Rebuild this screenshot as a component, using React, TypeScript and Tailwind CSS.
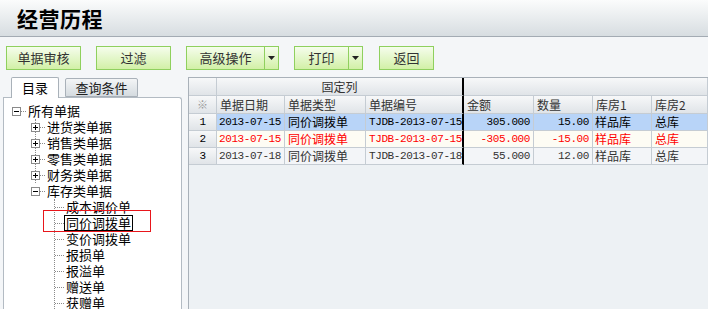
import React from "react";

const cjk = "font-['Noto_Sans_CJK_SC','Noto_Sans',sans-serif]";
const mono = "font-['Liberation_Mono','Noto_Sans_CJK_SC',monospace] text-[11px] tracking-[-0.4px]";

function Btn({ label, w, split }: { label: string; w: number; split?: boolean }) {
  return (
    <div
      className="flex h-[24px] border border-[#8fd05e] bg-gradient-to-b from-[#f5fdec] to-[#d2f0a6] text-[13px] text-[#333]"
      style={{ width: w }}
    >
      <div className="flex flex-1 items-center justify-center">{label}</div>
      {split && (
        <div className="flex w-[14px] items-center justify-center border-l border-[#8fd05e]">
          <svg width="7" height="4" viewBox="0 0 7 4">
            <path d="M0 0h7L3.5 4z" fill="#222" />
          </svg>
        </div>
      )}
    </div>
  );
}

function Exp({ plus }: { plus?: boolean }) {
  return (
    <svg width="9" height="9" viewBox="0 0 9 9" className="shrink-0">
      <rect x="0.5" y="0.5" width="8" height="8" fill="white" stroke="#8a8a8a" />
      <path d="M2 4.5h5" stroke="#000" />
      {plus && <path d="M4.5 2v5" stroke="#000" />}
    </svg>
  );
}

const hdot = "border-t border-dotted border-[#8a8a8a]";

function L1({ label, plus = true }: { label: string; plus?: boolean }) {
  return (
    <div className="flex h-[16px] items-center">
      <div className="ml-[-5px] flex items-center">
        <Exp plus={plus} />
      </div>
      <span className={`w-[5px] ${hdot}`} />
      <span className="ml-[2px] leading-[16px]">{label}</span>
    </div>
  );
}

function L2({ label, focus }: { label: string; focus?: boolean }) {
  return (
    <div className="flex h-[16px] items-center">
      <span className={`w-[9px] ${hdot}`} />
      <span
        className={`h-[16px] border px-[1px] leading-[14px] ${focus ? "border-black" : "border-transparent"}`}
      >
        {label}
      </span>
    </div>
  );
}

const cellB = "border-r border-b border-[#c5ccd3]";
const hdrBg = "bg-gradient-to-b from-[#f7f8f9] to-[#e0e4e8]";

type Row = { n: string; date: string; type: string; code: string; amt: string; qty: string; w1: string; w2: string; bg: string; color: string };

const rows: Row[] = [
  { n: "1", date: "2013-07-15", type: "同价调拨单", code: "TJDB-2013-07-15-001", amt: "305.000", qty: "15.00", w1: "样品库", w2: "总库", bg: "bg-[#b8d4f8]", color: "text-[#000]" },
  { n: "2", date: "2013-07-15", type: "同价调拨单", code: "TJDB-2013-07-15-002", amt: "-305.000", qty: "-15.00", w1: "样品库", w2: "总库", bg: "bg-[#fdfcf4]", color: "text-[#ff0000]" },
  { n: "3", date: "2013-07-18", type: "同价调拨单", code: "TJDB-2013-07-18-001", amt: "55.000", qty: "12.00", w1: "样品库", w2: "总库", bg: "bg-[#f3f5f8]", color: "text-[#333]" },
];

export default function App() {
  return (
    <div className={`flex h-[309px] w-[708px] flex-col overflow-hidden bg-[#f4f6f8] ${cjk}`}>
      {/* header */}
      <div className="h-[37px] shrink-0 border-b border-[#a3abb3] bg-gradient-to-b from-[#fbfcfc] to-[#d7dde1] pl-[17px]">
        <div className="text-[21px] font-bold leading-[36px] tracking-[0.5px] text-black">经营历程</div>
      </div>

      {/* toolbar */}
      <div className="mt-[9px] flex shrink-0 items-start pl-[6px]">
        <Btn label="单据审核" w={75} />
        <div className="ml-[15px]">
          <Btn label="过滤" w={75} />
        </div>
        <div className="ml-[15px]">
          <Btn label="高级操作" w={93} split />
        </div>
        <div className="ml-[15px]">
          <Btn label="打印" w={69} split />
        </div>
        <div className="ml-[16px]">
          <Btn label="返回" w={55} />
        </div>
      </div>

      {/* content */}
      <div className="mt-[7px] flex min-h-0 flex-1 pl-[3px]">
        {/* left panel */}
        <div className="flex w-[179px] shrink-0 flex-col">
          <div className="relative z-10 -mb-px flex h-[21px] items-start pl-[8px] text-[13px]">
            <div className="flex h-[21px] w-[48px] items-center justify-center rounded-t-[2px] border border-b-0 border-[#a9b1b9] bg-white text-black">
              目录
            </div>
            <div className="ml-[6px] mt-[1px] flex h-[19px] w-[73px] items-center justify-center rounded-t-[2px] border border-[#a9b1b9] bg-gradient-to-b from-[#f3f5f6] to-[#d5dbe0] text-[#222]">
              查询条件
            </div>
          </div>
          <div className="relative flex-1 rounded-tr-[3px] border border-b-0 border-[#b3bbc3] bg-white pt-[5px] text-[13px] text-black">
            <div className="flex h-[16px] items-center pl-[8px]">
              <Exp />
              <span className={`w-[5px] ${hdot}`} />
              <span className="ml-[2px] leading-[16px]">所有单据</span>
            </div>
            <div className="ml-[31px] border-l border-dotted border-[#8a8a8a]">
              <L1 label="进货类单据" />
              <L1 label="销售类单据" />
              <L1 label="零售类单据" />
              <L1 label="财务类单据" />
            </div>
            <div className="ml-[32px]">
              <L1 label="库存类单据" plus={false} />
            </div>
            <div className="ml-[50px] border-l border-dotted border-[#8a8a8a]">
              <L2 label="成本调价单" />
              <L2 label="同价调拨单" focus />
              <L2 label="变价调拨单" />
              <L2 label="报损单" />
              <L2 label="报溢单" />
              <L2 label="赠送单" />
              <L2 label="获赠单" />
            </div>
            <div className="absolute left-[39px] top-[112px] h-[22px] w-[108px] border border-[#e8161b]" />
          </div>
        </div>

        {/* grid */}
        <div className="ml-[6px] flex min-w-0 flex-1 flex-col border-l border-t border-[#a9b1b9] text-[12px]">
          {/* header row 1 */}
          <div className="flex h-[18px] shrink-0">
            <div className={`w-[28px] ${cellB} ${hdrBg}`} />
            <div className={`flex w-[247px] items-center justify-center border-b border-r-2 border-[#c5ccd3] border-r-black ${hdrBg} text-[#333]`}>
              固定列
            </div>
            <div className={`flex-1 ${cellB} ${hdrBg}`} />
          </div>
          {/* header row 2 */}
          <div className="flex h-[18px] shrink-0 text-[#333]">
            <div className={`flex w-[28px] items-center justify-center text-[11px] text-[#999] ${cellB} ${hdrBg}`}>※</div>
            <div className={`flex w-[68px] items-center pl-[3px] ${cellB} ${hdrBg}`}>单据日期</div>
            <div className={`flex w-[81px] items-center pl-[3px] ${cellB} ${hdrBg}`}>单据类型</div>
            <div className={`flex w-[98px] items-center pl-[3px] border-b border-r-2 border-[#c5ccd3] border-r-black ${hdrBg}`}>单据编号</div>
            <div className={`flex w-[70px] items-center pl-[3px] ${cellB} ${hdrBg}`}>金额</div>
            <div className={`flex w-[59px] items-center pl-[3px] ${cellB} ${hdrBg}`}>数量</div>
            <div className={`flex w-[59px] items-center pl-[3px] ${cellB} ${hdrBg}`}>库房1</div>
            <div className={`flex w-[56px] items-center pl-[3px] ${cellB} ${hdrBg}`}>库房2</div>
          </div>
          {rows.map((r) => (
            <div key={r.n} className={`flex h-[17px] shrink-0 ${r.color}`}>
              <div className={`flex w-[28px] items-center justify-center text-black ${mono} ${cellB} ${hdrBg}`}>{r.n}</div>
              <div className={`flex w-[68px] items-center pl-[2px] ${mono} ${cellB} ${r.bg}`}>{r.date}</div>
              <div className={`flex w-[81px] items-center pl-[3px] text-[12px] ${cellB} ${r.bg}`}>{r.type}</div>
              <div className={`flex w-[98px] items-center overflow-hidden whitespace-nowrap pl-[3px] border-b border-r-2 border-[#c5ccd3] border-r-black ${mono} ${r.bg}`}>{r.code}</div>
              <div className={`flex w-[70px] items-center justify-end pr-[3px] ${mono} ${cellB} ${r.bg}`}>{r.amt}</div>
              <div className={`flex w-[59px] items-center justify-end pr-[3px] ${mono} ${cellB} ${r.bg}`}>{r.qty}</div>
              <div className={`flex w-[59px] items-center pl-[2px] ${cellB} ${r.bg}`}>{r.w1}</div>
              <div className={`flex w-[56px] items-center pl-[3px] ${cellB} ${r.bg}`}>{r.w2}</div>
            </div>
          ))}
          <div className="flex-1 bg-[#edf1f4]" />
        </div>
      </div>
    </div>
  );
}
